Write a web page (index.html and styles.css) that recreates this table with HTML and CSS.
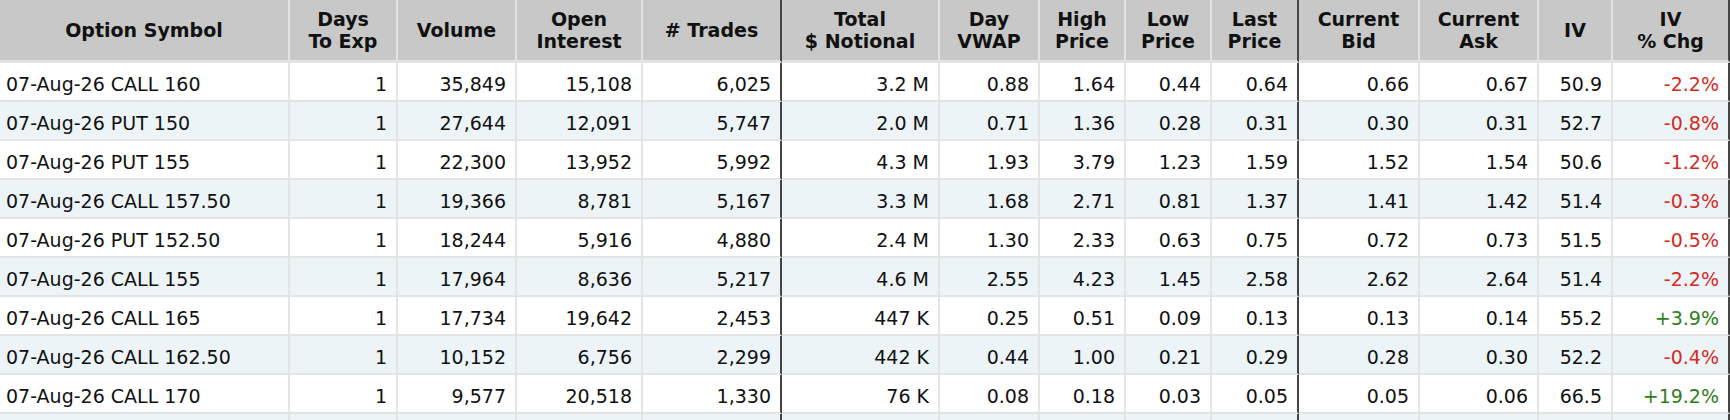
FILE: index.html
```html
<!DOCTYPE html>
<html lang="en">
<head>
<meta charset="utf-8">
<title>Most Active Options</title>
<link rel="stylesheet" href="styles.css">
</head>
<body>
<table class="opt-table">
  <colgroup>
    <col class="c-sym"><col class="c-days"><col class="c-vol"><col class="c-oi"><col class="c-trades">
    <col class="c-notional"><col class="c-vwap"><col class="c-high"><col class="c-low"><col class="c-last">
    <col class="c-bid"><col class="c-ask"><col class="c-iv"><col class="c-ivchg">
  </colgroup>
  <thead>
    <tr>
      <th>Option Symbol</th>
      <th>Days<br>To Exp</th>
      <th>Volume</th>
      <th>Open<br>Interest</th>
      <th class="sep">&#35; Trades</th>
      <th>Total<br>$ Notional</th>
      <th>Day<br>VWAP</th>
      <th>High<br>Price</th>
      <th>Low<br>Price</th>
      <th class="sep">Last<br>Price</th>
      <th>Current<br>Bid</th>
      <th>Current<br>Ask</th>
      <th>IV</th>
      <th class="end">IV<br>% Chg</th>
    </tr>
  </thead>
  <tbody>
    <tr>
      <td class="sym">07-Aug-26 CALL 160</td><td>1</td><td>35,849</td><td>15,108</td><td class="sep">6,025</td>
      <td>3.2 M</td><td>0.88</td><td>1.64</td><td>0.44</td><td class="sep">0.64</td>
      <td>0.66</td><td>0.67</td><td>50.9</td><td class="end neg">-2.2%</td>
    </tr>
    <tr>
      <td class="sym">07-Aug-26 PUT 150</td><td>1</td><td>27,644</td><td>12,091</td><td class="sep">5,747</td>
      <td>2.0 M</td><td>0.71</td><td>1.36</td><td>0.28</td><td class="sep">0.31</td>
      <td>0.30</td><td>0.31</td><td>52.7</td><td class="end neg">-0.8%</td>
    </tr>
    <tr>
      <td class="sym">07-Aug-26 PUT 155</td><td>1</td><td>22,300</td><td>13,952</td><td class="sep">5,992</td>
      <td>4.3 M</td><td>1.93</td><td>3.79</td><td>1.23</td><td class="sep">1.59</td>
      <td>1.52</td><td>1.54</td><td>50.6</td><td class="end neg">-1.2%</td>
    </tr>
    <tr>
      <td class="sym">07-Aug-26 CALL 157.50</td><td>1</td><td>19,366</td><td>8,781</td><td class="sep">5,167</td>
      <td>3.3 M</td><td>1.68</td><td>2.71</td><td>0.81</td><td class="sep">1.37</td>
      <td>1.41</td><td>1.42</td><td>51.4</td><td class="end neg">-0.3%</td>
    </tr>
    <tr>
      <td class="sym">07-Aug-26 PUT 152.50</td><td>1</td><td>18,244</td><td>5,916</td><td class="sep">4,880</td>
      <td>2.4 M</td><td>1.30</td><td>2.33</td><td>0.63</td><td class="sep">0.75</td>
      <td>0.72</td><td>0.73</td><td>51.5</td><td class="end neg">-0.5%</td>
    </tr>
    <tr>
      <td class="sym">07-Aug-26 CALL 155</td><td>1</td><td>17,964</td><td>8,636</td><td class="sep">5,217</td>
      <td>4.6 M</td><td>2.55</td><td>4.23</td><td>1.45</td><td class="sep">2.58</td>
      <td>2.62</td><td>2.64</td><td>51.4</td><td class="end neg">-2.2%</td>
    </tr>
    <tr>
      <td class="sym">07-Aug-26 CALL 165</td><td>1</td><td>17,734</td><td>19,642</td><td class="sep">2,453</td>
      <td>447 K</td><td>0.25</td><td>0.51</td><td>0.09</td><td class="sep">0.13</td>
      <td>0.13</td><td>0.14</td><td>55.2</td><td class="end pos">+3.9%</td>
    </tr>
    <tr>
      <td class="sym">07-Aug-26 CALL 162.50</td><td>1</td><td>10,152</td><td>6,756</td><td class="sep">2,299</td>
      <td>442 K</td><td>0.44</td><td>1.00</td><td>0.21</td><td class="sep">0.29</td>
      <td>0.28</td><td>0.30</td><td>52.2</td><td class="end neg">-0.4%</td>
    </tr>
    <tr>
      <td class="sym">07-Aug-26 CALL 170</td><td>1</td><td>9,577</td><td>20,518</td><td class="sep">1,330</td>
      <td>76 K</td><td>0.08</td><td>0.18</td><td>0.03</td><td class="sep">0.05</td>
      <td>0.05</td><td>0.06</td><td>66.5</td><td class="end pos">+19.2%</td>
    </tr>
    <tr>
      <td class="sym"></td><td></td><td></td><td></td><td class="sep"></td>
      <td></td><td></td><td></td><td></td><td class="sep"></td>
      <td></td><td></td><td></td><td class="end"></td>
    </tr>
  </tbody>
</table>
</body>
</html>
```
FILE: styles.css
```css
html, body {
  margin: 0;
  padding: 0;
  background: #ffffff;
}

body {
  font-family: "DejaVu Sans", Verdana, sans-serif;
  font-size: 19px;
  color: #111111;
}

.opt-table {
  width: 1730px;
  table-layout: fixed;
  border-collapse: separate;
  border-spacing: 0;
}

.c-sym { width: 290px; }
.c-days { width: 108px; }
.c-vol { width: 119px; }
.c-oi { width: 126px; }
.c-trades { width: 139px; }
.c-notional { width: 158px; }
.c-vwap { width: 100px; }
.c-high { width: 86px; }
.c-low { width: 86px; }
.c-last { width: 87px; }
.c-bid { width: 121px; }
.c-ask { width: 119px; }
.c-iv { width: 74px; }
.c-ivchg { width: 117px; }

.opt-table th,
.opt-table td {
  box-sizing: border-box;
  border-right: 2px solid #e4e4e4;
  white-space: nowrap;
  overflow: hidden;
}

.opt-table th {
  height: 63px;
  padding: 0 2px;
  background: #c8c8c8;
  border-bottom: 3px solid #e4e4e4;
  font-weight: bold;
  line-height: 22px;
  text-align: center;
  vertical-align: middle;
  color: #111111;
}

.opt-table td {
  height: 39px;
  padding: 4px 9px 0 6px;
  border-bottom: 2px solid #e4e4e4;
  text-align: right;
  vertical-align: middle;
  line-height: 22px;
}

.opt-table tbody tr:nth-child(even) td {
  background: #ecf4f7;
}

.opt-table td.sym {
  text-align: left;
}

.opt-table .sep {
  border-right-color: #454545;
}

.opt-table .end {
  border-right-color: #454545;
}

.neg { color: #d52a1f; }
.pos { color: #2e7d20; }
```
